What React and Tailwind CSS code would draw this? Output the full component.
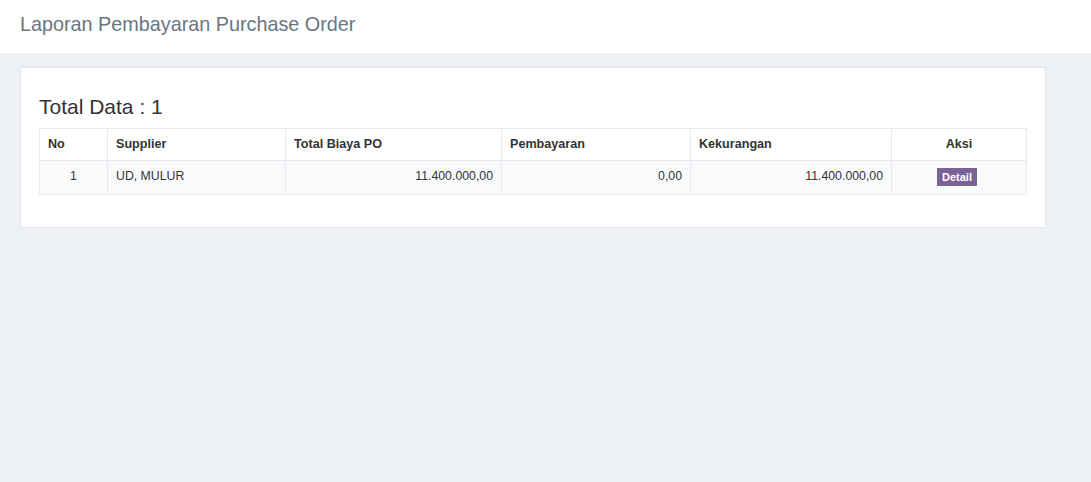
import React from 'react';

const rows = [
  { no: 1, supplier: 'UD, MULUR', total: '11.400.000,00', bayar: '0,00', kurang: '11.400.000,00' },
];

export default function App() {
  return (
    <div className="min-h-[482px] bg-[#edf0f5] font-['Liberation_Sans',Arial,sans-serif] text-[#333]">
      {/* Header */}
      <div className="h-[53px] bg-white flex items-center px-5">
        <h1 className="text-[19.8px] text-[#6a7580] leading-none pb-[3px]">Laporan Pembayaran Purchase Order</h1>
      </div>

      <div className="pt-[14px] pl-5 pr-[45px]">
        <div className="bg-white border border-[#e3e6ea] px-[18px] pt-[28px] pb-[32px]">
          <h2 className="text-[21px] leading-none mb-[11px] text-[#333]">Total Data : 1</h2>
          <table className="w-full border-collapse text-[12.3px]">
            <thead>
              <tr className="h-[32px] text-[12.6px]">
                <th className="w-[68px] border border-[#e6e9ee] text-left font-bold px-2">No</th>
                <th className="w-[178px] border border-[#e6e9ee] text-left font-bold px-2">Supplier</th>
                <th className="w-[216px] border border-[#e6e9ee] text-left font-bold px-2">Total Biaya PO</th>
                <th className="w-[189px] border border-[#e6e9ee] text-left font-bold px-2">Pembayaran</th>
                <th className="w-[201px] border border-[#e6e9ee] text-left font-bold px-2">Kekurangan</th>
                <th className="border border-[#e6e9ee] text-center font-bold px-2">Aksi</th>
              </tr>
            </thead>
            <tbody>
              {rows.map((r) => (
                <tr key={r.no} className="h-[34px] bg-[#f9fafc] align-top">
                  <td className="border border-[#e6e9ee] text-center pt-[6px]">{r.no}</td>
                  <td className="border border-[#e6e9ee] px-2 pt-[6px]">{r.supplier}</td>
                  <td className="border border-[#e6e9ee] px-2 text-right pt-[6px]">{r.total}</td>
                  <td className="border border-[#e6e9ee] px-2 text-right pt-[6px]">{r.bayar}</td>
                  <td className="border border-[#e6e9ee] px-2 text-right pt-[6px]">{r.kurang}</td>
                  <td className="border border-[#e6e9ee] text-center pt-[7px]">
                    <button className="bg-[#7b6398] text-white text-[11px] font-bold px-[5px] h-[18px] leading-[18px] -ml-[4px]">Detail</button>
                  </td>
                </tr>
              ))}
            </tbody>
          </table>
        </div>
      </div>
    </div>
  );
}
